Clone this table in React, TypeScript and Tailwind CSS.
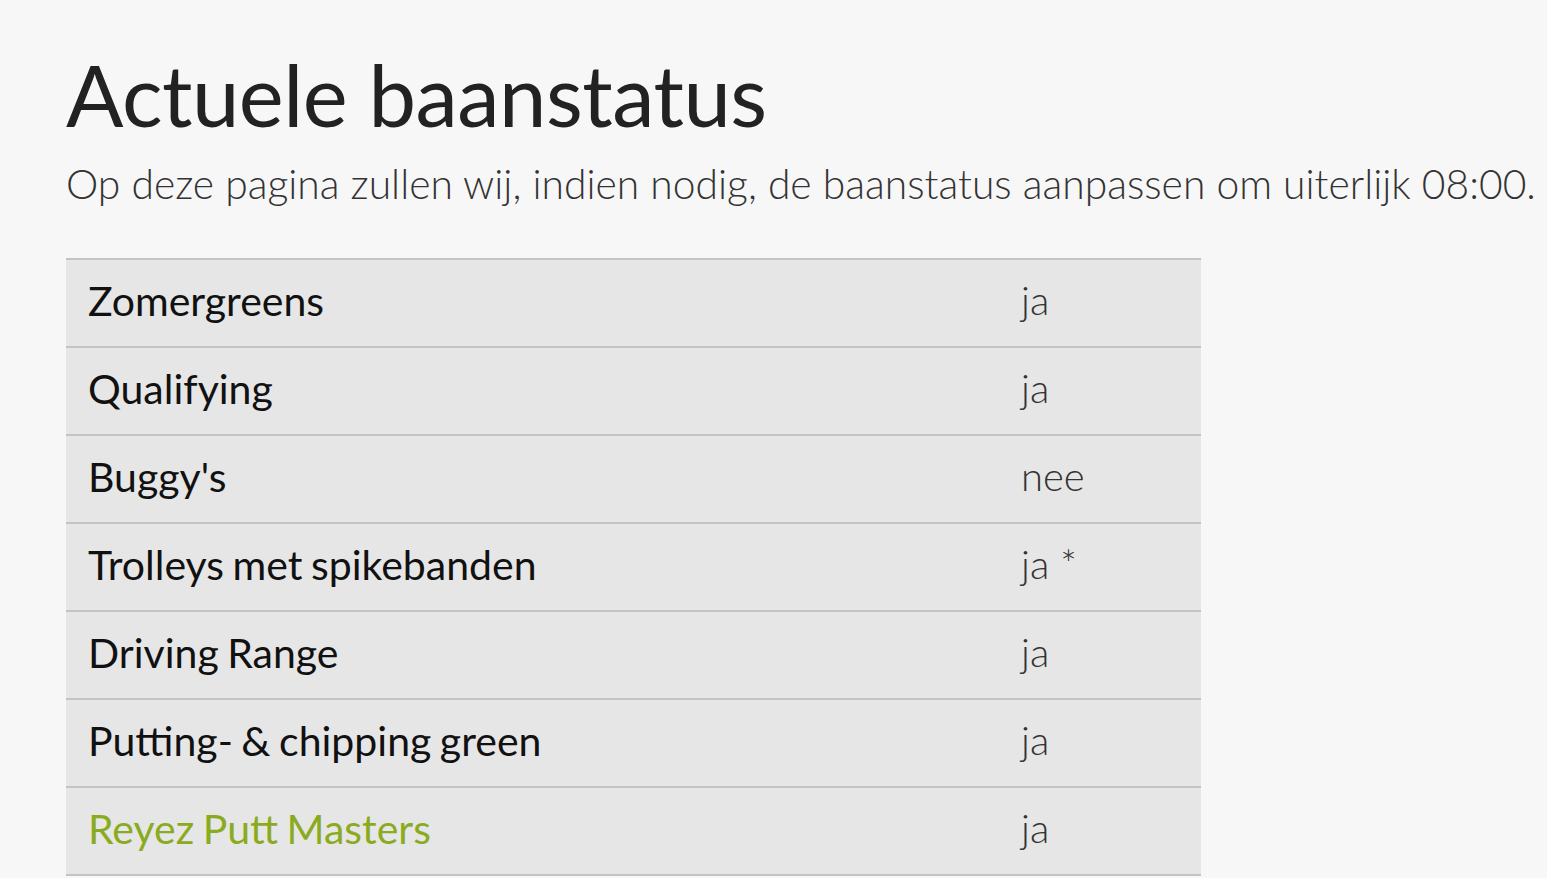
import React from "react";

const rows: { label: string; value: string; green?: boolean }[] = [
  { label: "Zomergreens", value: "ja" },
  { label: "Qualifying", value: "ja" },
  { label: "Buggy's", value: "nee" },
  { label: "Trolleys met spikebanden", value: "ja *" },
  { label: "Driving Range", value: "ja" },
  { label: "Putting- & chipping green", value: "ja" },
  { label: "Reyez Putt Masters", value: "ja", green: true },
];

export default function App() {
  return (
    <div
      className="w-[1547px] h-[878px] overflow-hidden bg-[#f7f7f7] pl-[66px]"
      style={{ fontFamily: "Lato, 'Open Sans', sans-serif" }}
    >
      <h1 className="text-[85px] leading-none font-normal text-[#222] pt-[52px] tracking-[-0.5px]">
        Actuele baanstatus
      </h1>
      <p className="text-[40.8px] font-light text-[#333] mt-[27px] leading-none whitespace-nowrap">
        Op deze pagina zullen wij, indien nodig, de baanstatus aanpassen om uiterlijk 08:00.
      </p>
      <div className="mt-[53px] w-[1135px] border-t-2 border-[#c4c4c4]">
        {rows.map((r) => (
          <div
            key={r.label}
            className="flex items-center h-[88px] pb-[5px] bg-[#e6e6e6] border-b-2 border-[#c4c4c4]"
          >
            <div
              className={`pl-[22px] w-[955px] text-[41px] [word-spacing:-2px] ${
                r.green ? "text-[#8bab1e]" : "text-[#111]"
              }`}
            >
              {r.label}
            </div>
            <div className="text-[40px] font-light text-[#333] whitespace-pre">{r.value}</div>
          </div>
        ))}
      </div>
    </div>
  );
}
